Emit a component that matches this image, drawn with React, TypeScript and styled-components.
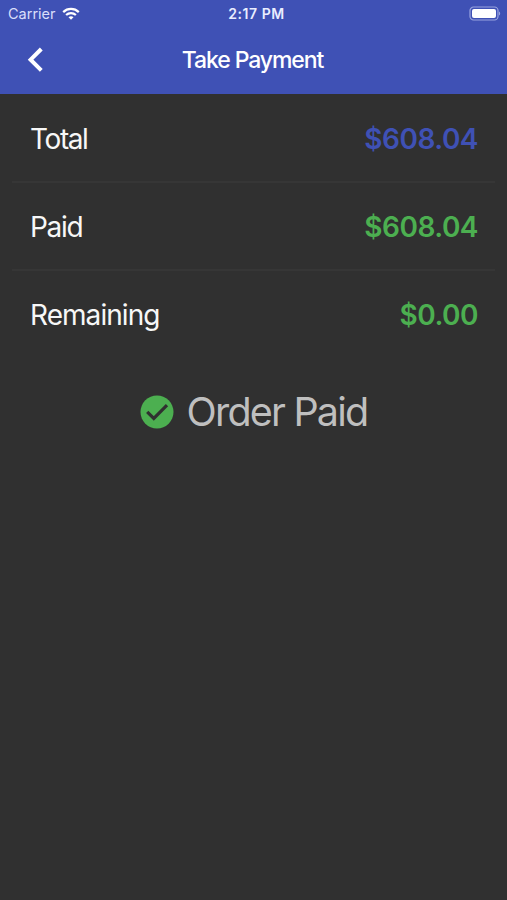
import React from "react";
import styled, { createGlobalStyle } from "styled-components";

const GlobalStyle = createGlobalStyle`
  * { box-sizing: border-box; }
  body { margin: 0; background: #303030; }
`;

const Screen = styled.main`
  display: flex;
  flex-direction: column;
  width: 507px;
  height: 900px;
  overflow: hidden;
  background: #303030;
  font-family: Inter, "Liberation Sans", sans-serif;
`;

const Header = styled.header`
  height: 94px;
  background: #3f51b5;
  color: #fff;
`;

const StatusBar = styled.div`
  display: grid;
  grid-template-columns: 1fr auto 1fr;
  align-items: center;
  height: 27px;
  padding: 0 6px 0 8px;
  color: #e9edff;
`;

const Carrier = styled.div`
  display: flex;
  align-items: center;
  gap: 6px;
  font-size: 14.5px;
  letter-spacing: 0;
  color: #d9defa;
`;

const Clock = styled.time`
  padding-left: 4px;
  font-size: 14px;
  font-weight: 600;
  letter-spacing: 0.55px;
`;

const Battery = styled.svg`
  justify-self: end;
`;

const NavBar = styled.div`
  display: grid;
  grid-template-columns: 72px 1fr 72px;
  align-items: center;
  height: 67px;
`;

const BackButton = styled.button`
  display: flex;
  width: 72px;
  height: 67px;
  padding: 20px 0 0 27px;
  border: 0;
  background: none;
  color: #fff;
`;

const Title = styled.h1`
  margin: 0;
  padding: 0 2px 2px 0;
  text-align: center;
  font-size: 23px;
  line-height: 28px;
  font-weight: 550;
  letter-spacing: -1.1px;
`;

const Summary = styled.dl`
  margin: 0 12px;
  padding-top: 1px;
`;

const Row = styled.div`
  display: flex;
  align-items: center;
  justify-content: space-between;
  height: 88px;
  padding: 2px 17px 0 18px;
  border-bottom: 2px solid #363636;
  &:last-child { border-bottom-color: transparent; }
`;

const Label = styled.dt<{ $tracking: number }>`
  color: #f7f7f7;
  font-size: 28px;
  line-height: 34px;
  letter-spacing: ${(p) => p.$tracking}px;
`;

const Amount = styled.dd<{ $color: string }>`
  margin: 0;
  color: ${(p) => p.$color};
  font-size: 28px;
  line-height: 34px;
  font-weight: 600;
  letter-spacing: -0.5px;
`;

const PaidNotice = styled.section`
  display: flex;
  align-items: center;
  justify-content: center;
  gap: 13px;
  height: 48px;
  margin-top: 29px;
  color: #bfbfbf;
  font-size: 39.5px;
  line-height: 48px;
  letter-spacing: -1.8px;
`;

const rows = [
  { label: "Total", amount: "$608.04", color: "#3f51b5", tracking: -1.4 },
  { label: "Paid", amount: "$608.04", color: "#4caf50", tracking: -1.3 },
  { label: "Remaining", amount: "$0.00", color: "#4caf50", tracking: -0.95 },
];

export default function App() {
  return (
    <Screen>
      <GlobalStyle />
      <Header>
        <StatusBar>
          <Carrier>
            <span>Carrier</span>
            <svg width="18" height="13" viewBox="0 0 18 13" fill="none" stroke="#fff" strokeWidth="2.2">
              <path d="M1.2 5.1C5.6.9 12.4.9 16.8 5.1" />
              <path d="M4.1 8C6.9 5.4 11.1 5.4 13.9 8" />
              <path d="M6.5 10.2C8 8.9 10 8.9 11.5 10.2L9 12.7Z" fill="#fff" stroke="none" />
            </svg>
          </Carrier>
          <Clock>2:17 PM</Clock>
          <Battery width="33" height="15" viewBox="0 0 33 15">
            <rect x="2" y="1" width="28" height="13" rx="3.6" fill="none" stroke="#99a4df" strokeWidth="1.2" />
            <rect x="4" y="3" width="24" height="9" rx="2" fill="#fff" />
            <path d="M31 5.5C32.6 6 32.6 9 31 9.5Z" fill="#99a4df" />
          </Battery>
        </StatusBar>
        <NavBar>
          <BackButton aria-label="Back">
            <svg width="18" height="26" viewBox="0 0 18 26" fill="none" stroke="#fff" strokeWidth="4">
              <path d="M14.3 2L3.6 12.7L14.3 23.4" />
            </svg>
          </BackButton>
          <Title>Take Payment</Title>
        </NavBar>
      </Header>
      <Summary>
        {rows.map((row) => (
          <Row key={row.label}>
            <Label $tracking={row.tracking}>{row.label}</Label>
            <Amount $color={row.color}>{row.amount}</Amount>
          </Row>
        ))}
      </Summary>
      <PaidNotice>
        <svg width="34" height="34" viewBox="0 0 34 34">
          <circle cx="17" cy="17" r="16.5" fill="#4caf50" />
          <path d="M7.2 16.8L13.8 23.4L27 10.2" fill="none" stroke="#303030" strokeWidth="3.2" />
        </svg>
        <span>Order Paid</span>
      </PaidNotice>
    </Screen>
  );
}
